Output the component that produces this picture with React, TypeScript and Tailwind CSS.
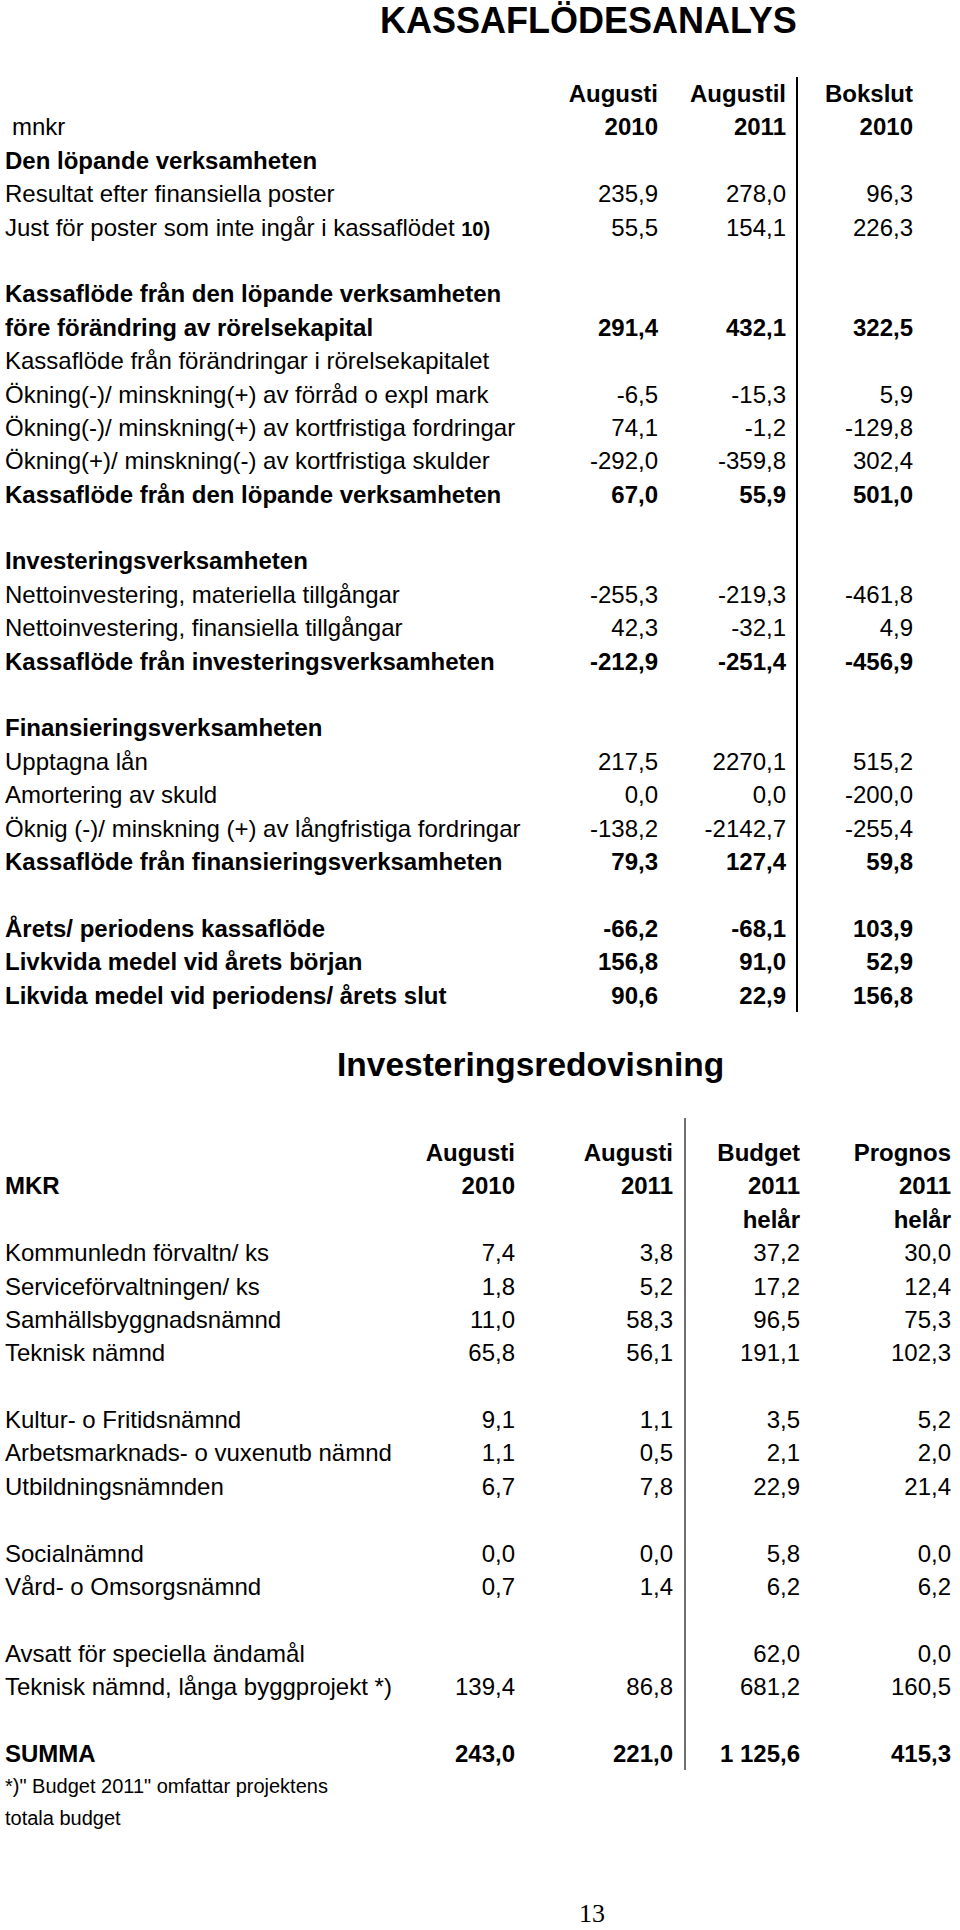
import React from "react";

type TopRow = {
  label?: React.ReactNode;
  v?: string[];
  lb?: boolean;
  vb?: boolean;
  indent?: boolean;
};

const topRows: TopRow[] = [
  { v: ["Augusti", "Augustil", "Bokslut"], vb: true },
  { label: "mnkr", indent: true, v: ["2010", "2011", "2010"], vb: true },
  { label: "Den löpande verksamheten", lb: true },
  { label: "Resultat efter finansiella poster", v: ["235,9", "278,0", "96,3"] },
  {
    label: (
      <>
        Just för poster som inte ingår i kassaflödet{" "}
        <span className="font-bold text-[20px]">10)</span>
      </>
    ),
    v: ["55,5", "154,1", "226,3"],
  },
  {},
  { label: "Kassaflöde från den löpande verksamheten", lb: true },
  { label: "före förändring av rörelsekapital", lb: true, v: ["291,4", "432,1", "322,5"], vb: true },
  { label: "Kassaflöde från förändringar i rörelsekapitalet" },
  { label: "Ökning(-)/ minskning(+) av förråd o expl mark", v: ["-6,5", "-15,3", "5,9"] },
  { label: "Ökning(-)/ minskning(+) av kortfristiga fordringar", v: ["74,1", "-1,2", "-129,8"] },
  { label: "Ökning(+)/ minskning(-) av kortfristiga skulder", v: ["-292,0", "-359,8", "302,4"] },
  { label: "Kassaflöde från den löpande verksamheten", lb: true, v: ["67,0", "55,9", "501,0"], vb: true },
  {},
  { label: "Investeringsverksamheten", lb: true },
  { label: "Nettoinvestering, materiella tillgångar", v: ["-255,3", "-219,3", "-461,8"] },
  { label: "Nettoinvestering, finansiella tillgångar", v: ["42,3", "-32,1", "4,9"] },
  { label: "Kassaflöde från investeringsverksamheten", lb: true, v: ["-212,9", "-251,4", "-456,9"], vb: true },
  {},
  { label: "Finansieringsverksamheten", lb: true },
  { label: "Upptagna lån", v: ["217,5", "2270,1", "515,2"] },
  { label: "Amortering av skuld", v: ["0,0", "0,0", "-200,0"] },
  { label: "Öknig (-)/ minskning (+) av långfristiga fordringar", v: ["-138,2", "-2142,7", "-255,4"] },
  { label: "Kassaflöde från finansieringsverksamheten", lb: true, v: ["79,3", "127,4", "59,8"], vb: true },
  {},
  { label: "Årets/ periodens kassaflöde", lb: true, v: ["-66,2", "-68,1", "103,9"], vb: true },
  { label: "Livkvida medel vid årets början", lb: true, v: ["156,8", "91,0", "52,9"], vb: true },
  { label: "Likvida medel vid periodens/ årets slut", lb: true, v: ["90,6", "22,9", "156,8"], vb: true },
];

type BotRow = { label?: string; v?: string[]; b?: boolean };

const botRows: BotRow[] = [
  { v: ["Augusti", "Augusti", "Budget", "Prognos"], b: true },
  { label: "MKR", v: ["2010", "2011", "2011", "2011"], b: true },
  { v: ["", "", "helår", "helår"], b: true },
  { label: "Kommunledn förvaltn/ ks", v: ["7,4", "3,8", "37,2", "30,0"] },
  { label: "Serviceförvaltningen/ ks", v: ["1,8", "5,2", "17,2", "12,4"] },
  { label: "Samhällsbyggnadsnämnd", v: ["11,0", "58,3", "96,5", "75,3"] },
  { label: "Teknisk nämnd", v: ["65,8", "56,1", "191,1", "102,3"] },
  {},
  { label: "Kultur- o Fritidsnämnd", v: ["9,1", "1,1", "3,5", "5,2"] },
  { label: "Arbetsmarknads- o vuxenutb nämnd", v: ["1,1", "0,5", "2,1", "2,0"] },
  { label: "Utbildningsnämnden", v: ["6,7", "7,8", "22,9", "21,4"] },
  {},
  { label: "Socialnämnd", v: ["0,0", "0,0", "5,8", "0,0"] },
  { label: "Vård- o Omsorgsnämnd", v: ["0,7", "1,4", "6,2", "6,2"] },
  {},
  { label: "Avsatt för speciella ändamål", v: ["", "", "62,0", "0,0"] },
  { label: "Teknisk nämnd, långa byggprojekt *)", v: ["139,4", "86,8", "681,2", "160,5"] },
  {},
  { label: "SUMMA", v: ["243,0", "221,0", "1 125,6", "415,3"], b: true },
];

export default function App() {
  return (
    <div
      className="w-[960px] h-[1930px] bg-white text-black overflow-hidden"
      style={{ fontFamily: '"Liberation Sans", Arial, sans-serif' }}
    >
      {/* Title 1 */}
      <div className="pt-[3px] pl-[380px] text-[36px] leading-[36px] font-bold whitespace-nowrap">
        KASSAFLÖDESANALYS
      </div>

      {/* Top table */}
      <div className="mt-[38px] pl-[5px] text-[24px]">
        {topRows.map((r, i) => (
          <div
            key={i}
            className="grid grid-cols-[555px_98px_138px_117px] h-[33.4px] leading-[33.4px] whitespace-nowrap"
          >
            <div className={`${r.lb ? "font-bold" : ""} ${r.indent ? "pl-[7px]" : ""}`}>{r.label}</div>
            <div className={`text-right ${r.vb ? "font-bold" : ""}`}>{r.v?.[0]}</div>
            <div className={`text-right pr-[10px] ${r.vb ? "font-bold" : ""}`}>{r.v?.[1]}</div>
            <div className={`text-right border-l-2 border-black ${r.vb ? "font-bold" : ""}`}>{r.v?.[2]}</div>
          </div>
        ))}
      </div>

      {/* Title 2 */}
      <div className="mt-[35px] pl-[337px] text-[33.5px] leading-[36px] font-bold whitespace-nowrap">
        Investeringsredovisning
      </div>

      {/* Bottom table */}
      <div className="mt-[35px] pl-[5px] text-[24px]">
        <div className="grid grid-cols-[410px_100px_169px_116px_151px] h-[18px]">
          <div />
          <div />
          <div />
          <div className="border-l-2 border-[#707070]" />
          <div />
        </div>
        {botRows.map((r, i) => (
          <div
            key={i}
            className={`grid grid-cols-[410px_100px_169px_116px_151px] h-[33.4px] leading-[33.4px] whitespace-nowrap ${
              r.b ? "font-bold" : ""
            }`}
          >
            <div>{r.label}</div>
            <div className="text-right">{r.v?.[0]}</div>
            <div className="text-right pr-[11px]">{r.v?.[1]}</div>
            <div className="text-right border-l-2 border-[#707070]">{r.v?.[2]}</div>
            <div className="text-right">{r.v?.[3]}</div>
          </div>
        ))}
      </div>

      {/* Footnote */}
      <div className="pl-[5px] text-[20px]">
        <div className="h-[32px] leading-[32px]">*)" Budget 2011" omfattar projektens</div>
        <div className="h-[32px] leading-[32px]">totala budget</div>
      </div>

      {/* Page number */}
      <div
        className="mt-[65px] pl-[579px] text-[26px] leading-[30px]"
        style={{ fontFamily: '"Liberation Serif", "Times New Roman", serif' }}
      >
        13
      </div>
    </div>
  );
}
